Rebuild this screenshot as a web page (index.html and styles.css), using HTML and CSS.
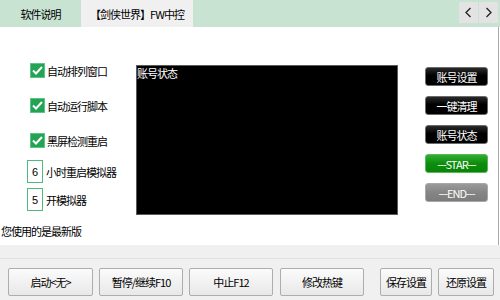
FILE: index.html
```html
<!DOCTYPE html>
<html lang="zh-CN">
<head>
    <meta charset="UTF-8">
    <title>【剑侠世界】FW中控</title>
    <link rel="stylesheet" href="styles.css">
</head>
<body>
    <div class="window">
        <div class="tabbar">
            <div class="tab">软件说明</div>
            <div class="tab active">【剑侠世界】FW中控</div>
            <div class="tab-arrows">
                <span class="arrow">
                    <svg width="9" height="11" viewBox="0 0 9 11"><path d="M6.5 1 L2 5.5 L6.5 10" fill="none" stroke="#222" stroke-width="1.3"/></svg>
                </span>
                <span class="arrow">
                    <svg width="9" height="11" viewBox="0 0 9 11"><path d="M2.5 1 L7 5.5 L2.5 10" fill="none" stroke="#222" stroke-width="1.3"/></svg>
                </span>
            </div>
        </div>

        <div class="content">
            <div class="work">
                <div class="options">
                    <label class="check">
                        <span class="box"><svg width="11" height="9" viewBox="0 0 11 9"><path d="M1 4.5 L4 7.5 L10 1" fill="none" stroke="#fff" stroke-width="2"/></svg></span>
                        自动排列窗口
                    </label>
                    <label class="check">
                        <span class="box"><svg width="11" height="9" viewBox="0 0 11 9"><path d="M1 4.5 L4 7.5 L10 1" fill="none" stroke="#fff" stroke-width="2"/></svg></span>
                        自动运行脚本
                    </label>
                    <label class="check">
                        <span class="box"><svg width="11" height="9" viewBox="0 0 11 9"><path d="M1 4.5 L4 7.5 L10 1" fill="none" stroke="#fff" stroke-width="2"/></svg></span>
                        黑屏检测重启
                    </label>
                    <div class="num-row">
                        <span class="num">6</span>
                        小时重启模拟器
                    </div>
                    <div class="num-row">
                        <span class="num">5</span>
                        开模拟器
                    </div>
                </div>

                <div class="screen">账号状态</div>

                <div class="actions">
                    <button class="act">账号设置</button>
                    <button class="act">一键清理</button>
                    <button class="act">账号状态</button>
                    <button class="act start">---STAR---</button>
                    <button class="act stop">---END---</button>
                </div>
            </div>
            <div class="status">您使用的是最新版</div>
        </div>

        <div class="footer">
            <div class="footer-bar">
                <button class="btn w85">启动&lt;无&gt;</button>
                <button class="btn w84">暂停/继续F10</button>
                <button class="btn w84">中止F12</button>
                <button class="btn w84 gap-r">修改热键</button>
                <button class="btn w52">保存设置</button>
                <button class="btn w56">还原设置</button>
            </div>
        </div>
    </div>
</body>
</html>
```

FILE: styles.css
```css
* {
    box-sizing: border-box;
}
html, body {
    margin: 0;
}
body {
    font-family: "Noto Sans CJK SC", "Liberation Sans", sans-serif;
    font-size: 11px;
    letter-spacing: -1px;
    color: #000;
    background: #fff;
}
.window {
    width: 500px;
    height: 300px;
    display: flex;
    flex-direction: column;
    overflow: hidden;
}

/* tabs */
.tabbar {
    height: 27px;
    background: #c8e3d2;
    display: flex;
    align-items: stretch;
}
.tab {
    display: flex;
    align-items: center;
    justify-content: center;
    width: 81px;
    white-space: nowrap;
}
.tab.active {
    width: 112px;
    background: #f0f0f0;
}
.tab-arrows {
    margin-left: auto;
    margin-right: 2px;
    padding-top: 2px;
    display: flex;
    height: 23px;
    gap: 1px;
}
.arrow {
    width: 19px;
    height: 21px;
    background: #e3e3e3;
    display: flex;
    align-items: center;
    justify-content: center;
}

/* main area */
.content {
    height: 218px;
    border-right: 1px solid #a8a8a8;
    margin-right: 1px;
    display: flex;
    flex-direction: column;
}
.work {
    display: flex;
    height: 194px;
}
.options {
    width: 136px;
    padding-left: 27px;
    padding-top: 36px;
    display: flex;
    flex-direction: column;
}
.check {
    display: flex;
    align-items: center;
    height: 15px;
    padding-left: 3px;
    gap: 2px;
    white-space: nowrap;
}
.check + .check {
    margin-top: 20px;
}
.box {
    width: 15px;
    height: 15px;
    background: #23a455;
    border: 1px solid #5cc486;
    display: flex;
    align-items: center;
    justify-content: center;
}
.num-row {
    display: flex;
    align-items: center;
    height: 23px;
    gap: 3px;
    white-space: nowrap;
    margin-top: 12px;
}
.num-row + .num-row {
    margin-top: 5px;
}
.num {
    width: 16px;
    height: 23px;
    border: 1px solid #4dbb7c;
    padding-left: 4px;
    display: flex;
    align-items: center;
    font-family: "Liberation Sans", sans-serif;
    letter-spacing: 0;
}
.screen {
    margin-top: 38px;
    width: 262px;
    height: 150px;
    background: #000;
    border: 1px solid #5a5a5a;
    color: #fff;
    line-height: 14px;
    white-space: nowrap;
}
.actions {
    margin-left: 27px;
    padding-top: 40px;
    display: flex;
    flex-direction: column;
    gap: 10px;
}
.act {
    width: 63px;
    height: 19px;
    padding: 0;
    font-family: inherit;
    font-size: 11px;
    letter-spacing: -1px;
    color: #fff;
    background: linear-gradient(#2a2a2a, #000 45%, #000);
    border: 1px solid #6a6a6a;
    border-radius: 3px;
}
.act.start {
    background: linear-gradient(#2fae2f, #0e8c0e 50%, #078507);
    border-color: #5db55d;
}
.act.stop {
    background: linear-gradient(#9a9a9a, #858585 50%, #7c7c7c);
    border-color: #a8a8a8;
}
.status {
    padding-left: 1px;
    padding-top: 2px;
    line-height: 16px;
}

/* footer */
.footer {
    height: 55px;
    background: #f0f0f0;
    padding-top: 13px;
}
.footer-bar {
    border-top: 1px solid #e0e0e0;
    padding: 9px 0 0 8px;
    display: flex;
    gap: 6px;
}
.btn {
    height: 28px;
    padding: 0;
    font-family: inherit;
    font-size: 11px;
    letter-spacing: -1px;
    color: #000;
    background: linear-gradient(#fbfbfb, #e8e8e8);
    border: 1px solid #adadad;
    border-radius: 2px;
    white-space: nowrap;
}
.w85 { width: 85px; }
.w84 { width: 84px; }
.w52 { width: 52px; }
.w56 { width: 56px; }
.gap-r {
    margin-left: 1px;
    margin-right: 10px;
}
```
